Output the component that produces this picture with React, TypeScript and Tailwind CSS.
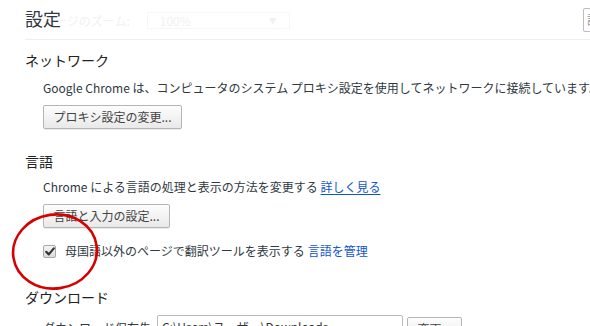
import React from "react";

const font = { fontFamily: '"Segoe UI", "Noto Sans CJK JP", "Noto Sans", sans-serif' };

function Btn({ children, w }: { children: React.ReactNode; w: string }) {
  return (
    <div
      className={`${w} h-[24px] flex items-center justify-center rounded-[2px] border border-[#b5b5b5] bg-gradient-to-b from-[#fdfdfd] to-[#e9e9e9] text-[12px] leading-[14px] text-[#444] shadow-[0_1px_0_rgba(0,0,0,0.08)]`}
    >
      {children}
    </div>
  );
}

export default function App() {
  return (
    <div className="relative w-[590px] h-[326px] overflow-hidden bg-white text-[#303942]" style={font}>
      {/* header */}
      <div className="relative ml-[25px] h-[40px] border-b border-[#eeeeee]">
        {/* ghosted content underneath */}
        <div className="absolute left-[18px] top-[12px] flex items-center text-[12px] leading-[16px] text-[#f1f1f1]">
          <span>ページのズーム:</span>
          <div className="ml-[17px] w-[143px] h-[17px] border border-[#f6f6f6] flex items-center justify-between px-[12px]">
            <span>100%</span>
            <span className="text-[8px]">▼</span>
          </div>
        </div>
        <div className="relative pt-[8px] text-[18px] leading-[20px] text-[#303942]">設定</div>
        <div className="absolute left-[558px] top-[8px] w-[120px] h-[24px] border border-[#bdbdbd] rounded-[2px] bg-white pl-[3px] text-[12px] leading-[22px] text-[#999]">
          設定を検索
        </div>
      </div>

      <div className="pl-[25px]">
        <div className="mt-[10px] text-[14px] leading-[20px] text-[#222]">ネットワーク</div>
        <div className="pl-[18px]">
          <div className="mt-[10px] text-[12px] leading-[16px] whitespace-nowrap">
            Google Chrome は、コンピュータのシステム プロキシ設定を使用してネットワークに接続しています。
          </div>
          <div className="mt-[9px]">
            <Btn w="w-[139px]">プロキシ設定の変更...</Btn>
          </div>
        </div>

        <div className="mt-[22px] text-[14px] leading-[20px] text-[#222]">言語</div>
        <div className="pl-[18px]">
          <div className="mt-[8px] text-[12px] leading-[16px] whitespace-nowrap">
            Chrome による言語の処理と表示の方法を変更する{" "}
            <span className="text-[#1155cc] underline underline-offset-2">詳しく見る</span>
          </div>
          <div className="mt-[9px]">
            <Btn w="w-[127px]">言語と入力の設定...</Btn>
          </div>
          <div className="mt-[15px] flex items-center h-[16px] text-[12px] leading-[16px] whitespace-nowrap">
            <div className="w-[13px] h-[13px] rounded-[2px] border border-[#a8a8a8] bg-gradient-to-b from-[#f4f4f4] to-[#dcdcdc] flex items-center justify-center">
              <svg width="10" height="9" viewBox="0 0 10 9">
                <path d="M1.2 4.8 L3.8 7.4 L8.8 1.4" fill="none" stroke="#333" strokeWidth="2.2" strokeLinecap="round" strokeLinejoin="round" />
              </svg>
            </div>
            <span className="ml-[9px]">母国語以外のページで翻訳ツールを表示する</span>
            <span className="ml-[3px] text-[#1155cc]">言語を管理</span>
          </div>
        </div>

        <div className="mt-[28px] text-[14px] leading-[20px] text-[#222]">ダウンロード</div>
        <div className="pl-[18px] mt-[8px] flex items-start text-[12px] leading-[16px] whitespace-nowrap">
          <span className="mt-[5px] w-[114px]">ダウンロード保存先:</span>
          <div className="w-[246px] h-[24px] border border-[#bbbbbb] rounded-[2px] px-[4px] leading-[22px] text-[#333]">
            C:\Users\ユーザー\Downloads
          </div>
          <div className="ml-[4px] mt-[2px]">
            <Btn w="w-[55px]">変更...</Btn>
          </div>
        </div>
      </div>

      {/* red annotation circle */}
      <svg className="absolute left-0 top-0 pointer-events-none" width="590" height="326">
        <ellipse cx="55" cy="251.5" rx="42" ry="37" transform="rotate(-8 55 251.5)" fill="none" stroke="#d60000" strokeWidth="2.6" />
      </svg>
    </div>
  );
}
